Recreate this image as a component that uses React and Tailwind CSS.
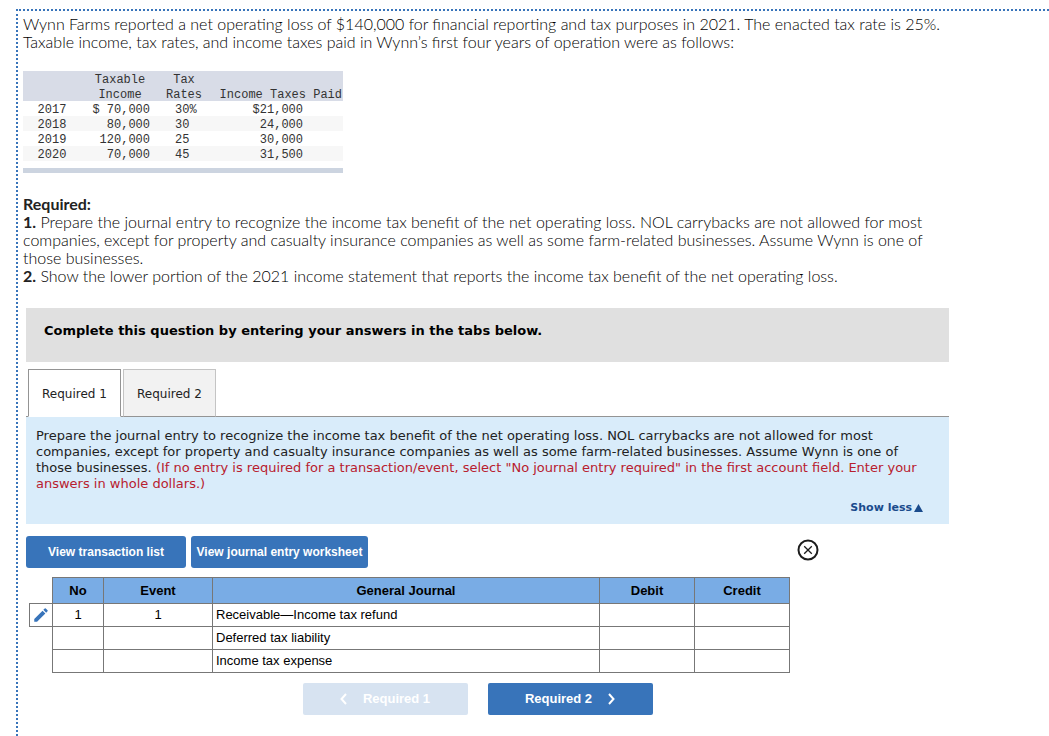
import React, { useState } from 'react';
import { MdEdit } from 'react-icons/md';

const taxYears = [
  { year: '2017', income: '$ 70,000', rate: '30%', paid: '$21,000' },
  { year: '2018', income: '80,000', rate: '30', paid: '24,000' },
  { year: '2019', income: '120,000', rate: '25', paid: '30,000' },
  { year: '2020', income: '70,000', rate: '45', paid: '31,500' },
];

const journalRows = [
  { no: '1', event: '1', account: 'Receivable—Income tax refund', debit: '', credit: '' },
  { no: '', event: '', account: 'Deferred tax liability', debit: '', credit: '' },
  { no: '', event: '', account: 'Income tax expense', debit: '', credit: '' },
];

const TaxTable = () => (
  <div className="w-80 border-b-5 border-[#ccd4e0] pb-[7px]">
    <table className="w-full table-fixed border-collapse font-['Liberation_Mono',monospace] text-[12px] leading-[11px] text-[#333]">
      <colgroup>
        <col className="w-[58px]" />
        <col className="w-[78px]" />
        <col className="w-[50px]" />
        <col />
      </colgroup>
      <thead className="bg-[#d8dce7]">
        <tr>
          <th className="p-0 pt-1" />
          <th className="p-0 pt-1 text-center font-normal">Taxable</th>
          <th className="p-0 pt-1 text-center font-normal">Tax</th>
          <th className="p-0 pt-1" />
        </tr>
        <tr>
          <th className="p-0 pt-1" />
          <th className="p-0 pt-1 text-center font-normal">Income</th>
          <th className="p-0 pt-1 text-center font-normal">Rates</th>
          <th className="p-0 pt-1 pr-px text-right font-normal whitespace-nowrap">Income Taxes Paid</th>
        </tr>
      </thead>
      <tbody>
        {taxYears.map((row) => (
          <tr key={row.year} className="even:bg-[#f7f7f7]">
            <td className="p-0 pt-1 text-center">{row.year}</td>
            <td className="p-0 pt-1 pr-[9px] text-right">{row.income}</td>
            <td className="p-0 pt-1 pl-4">{row.rate}</td>
            <td className="p-0 pt-1 pr-10 text-right">{row.paid}</td>
          </tr>
        ))}
      </tbody>
    </table>
  </div>
);

const JournalTable = () => (
  <table className="w-full table-fixed border-collapse font-['Liberation_Sans',Arial,sans-serif] text-[13px] leading-4 text-black">
    <colgroup>
      <col className="w-[23px]" />
      <col className="w-[51px]" />
      <col className="w-[109px]" />
      <col />
      <col className="w-[95px]" />
      <col className="w-[95px]" />
    </colgroup>
    <thead>
      <tr className="h-[26px]">
        <td className="p-0" />
        {['No', 'Event', 'General Journal', 'Debit', 'Credit'].map((label) => (
          <th key={label} className="border border-[#777] bg-[#79ace5] p-0 text-center font-bold">{label}</th>
        ))}
      </tr>
    </thead>
    <tbody>
      {journalRows.map((row, i) => (
        <tr key={row.account} className="h-[23px]">
          {i === 0 ? (
            <td className="border border-[#777] p-0">
              <button type="button" aria-label="Edit entry" className="mx-auto block text-[#3874ba]">
                <MdEdit size={18} />
              </button>
            </td>
          ) : (
            <td className="p-0" />
          )}
          <td className="border border-[#777] p-0 text-center">{row.no}</td>
          <td className="border border-[#777] p-0 text-center">{row.event}</td>
          <td className="border border-[#777] p-0 pl-[3px]">{row.account}</td>
          <td className="border border-[#777] p-0 text-right">{row.debit}</td>
          <td className="border border-[#777] p-0 text-right">{row.credit}</td>
        </tr>
      ))}
    </tbody>
  </table>
);

const Tab = ({ active, onClick, children }) => (
  <button
    type="button"
    role="tab"
    aria-selected={active}
    onClick={onClick}
    className={
      active
        ? '-mb-px h-12 w-[93px] border border-[#949494] border-b-white bg-white pt-0.5'
        : '-mb-px h-12 w-[93px] border border-[#c4c4c4] border-b-[#949494] bg-[#f2f2f2] pt-0.5'
    }
  >
    {children}
  </button>
);

const App = () => {
  const [tab, setTab] = useState(1);

  return (
    <div className="flex min-h-screen bg-white pt-[9px] pl-4">
      <main className="flex-1 border-t-2 border-l-2 border-dotted border-[#3874ba] pt-1 pr-[100px] pb-5 pl-[5px] font-['DejaVu_Sans',Verdana,sans-serif] text-[12px] leading-4 text-[#222]">
        <p className="font-['Lato',sans-serif] text-[16px] leading-[18px] font-light text-black">
          Wynn Farms reported a net operating loss of $140,000 for financial reporting and tax purposes in 2021. The enacted tax rate is 25%. Taxable income, tax rates, and income taxes paid in Wynn’s first four years of operation were as follows:
        </p>

        <div className="mt-5">
          <TaxTable />
        </div>

        <div className="mt-[22px] font-['Lato',sans-serif] text-[16px] leading-[18px] font-light text-black">
          <h2 className="font-bold text-[#222]">Required:</h2>
          <p>
            <b className="font-bold text-[#222]">1.</b> Prepare the journal entry to recognize the income tax benefit of the net operating loss. NOL carrybacks are not allowed for most companies, except for property and casualty insurance companies as well as some farm-related businesses. Assume Wynn is one of those businesses.
          </p>
          <p>
            <b className="font-bold text-[#222]">2.</b> Show the lower portion of the 2021 income statement that reports the income tax benefit of the net operating loss.
          </p>
        </div>

        <section className="mt-[23px] ml-[3px]">
          <div className="bg-[#e0e0e0] px-[18px] pt-[15px] pb-[23px] text-[13px] font-bold text-black">
            Complete this question by entering your answers in the tabs below.
          </div>

          <div role="tablist" className="mt-[7px] flex gap-[2px] border-b border-[#949494] pl-[2px]">
            <Tab active={tab === 1} onClick={() => setTab(1)}>Required 1</Tab>
            <Tab active={tab === 2} onClick={() => setTab(2)}>Required 2</Tab>
          </div>

          <div className="bg-[#d9ecfa] pt-[11px] pb-2 pl-2.5">
            <p className="pr-[22px] text-[13px]">
              Prepare the journal entry to recognize the income tax benefit of the net operating loss. NOL carrybacks are not allowed for most companies, except for property and casualty insurance companies as well as some farm-related businesses. Assume Wynn is one of those businesses.{' '}
              <span className="text-[#b8202e]">
                (If no entry is required for a transaction/event, select "No journal entry required" in the first account field. Enter your answers in whole dollars.)
              </span>
            </p>
            <div className="mt-2 flex justify-end pr-[26px]">
              <button type="button" className="flex items-center gap-[2px] text-[11px] leading-4 font-bold text-[#1a4b8c]">
                Show less
                <svg width="9" height="8" viewBox="0 0 9 8" fill="currentColor">
                  <path d="M4.5 0L9 8H0z" />
                </svg>
              </button>
            </div>
          </div>

          <div className="mr-[130px] flex items-start gap-[5px] pt-3 font-['Liberation_Sans',Arial,sans-serif] font-bold text-white">
            <button type="button" className="h-8 w-40 rounded-[3px] bg-[#3874ba]">View transaction list</button>
            <button type="button" className="h-8 w-[177px] rounded-[3px] bg-[#3874ba] whitespace-nowrap">View journal entry worksheet</button>
            <button type="button" aria-label="Close" className="mt-[3px] ml-auto text-[#1c1c1c]">
              <svg width="22" height="22" viewBox="0 0 22 22" fill="none" stroke="currentColor">
                <circle cx="11" cy="11" r="9.5" strokeWidth="2" />
                <path d="M7.2 7.2l7.6 7.6M14.8 7.2l-7.6 7.6" strokeWidth="1.3" />
              </svg>
            </button>
          </div>

          <div className="mt-[9px] mr-[159px] ml-[3px]">
            <JournalTable />
          </div>

          <div className="mt-2.5 mr-5 flex justify-center gap-5 font-['Liberation_Sans',Arial,sans-serif] text-[13px] font-bold text-white">
            <button type="button" disabled={tab === 1} onClick={() => setTab(1)} className="flex h-8 w-[165px] items-center justify-center gap-4 rounded-[2px] bg-[#3874ba] disabled:bg-[#d7e3f1]">
              <svg width="7" height="12" viewBox="0 0 7 12" fill="none" stroke="currentColor" strokeWidth="2">
                <path d="M6 1L1.5 6L6 11" />
              </svg>
              Required 1
            </button>
            <button type="button" disabled={tab === 2} onClick={() => setTab(2)} className="flex h-8 w-[165px] items-center justify-center gap-4 rounded-[2px] bg-[#3874ba] disabled:bg-[#d7e3f1]">
              Required 2
              <svg width="7" height="12" viewBox="0 0 7 12" fill="none" stroke="currentColor" strokeWidth="2">
                <path d="M1 1L5.5 6L1 11" />
              </svg>
            </button>
          </div>
        </section>
      </main>
    </div>
  );
};

export default App;
